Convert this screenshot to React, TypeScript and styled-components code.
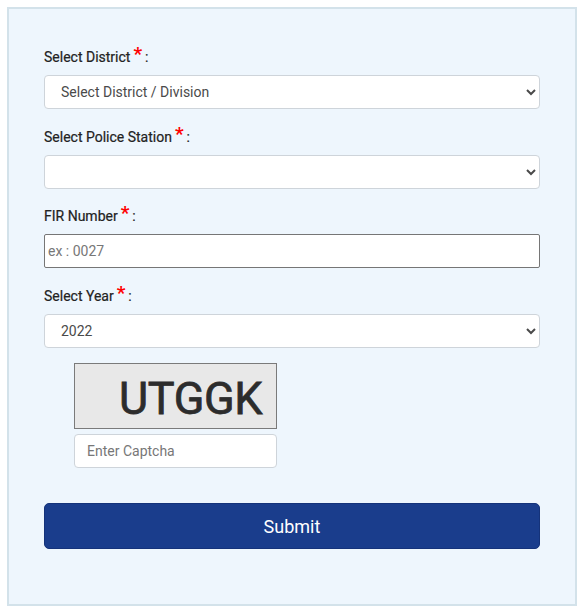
import React from "react";
import styled, { createGlobalStyle } from "styled-components";

const GlobalStyle = createGlobalStyle`
  body {
    margin: 0;
    background: #ffffff;
    font-family: Roboto, "Liberation Sans", Arial, sans-serif;
  }
`;

const Panel = styled.form`
  box-sizing: border-box;
  margin: 7px 0 0 7px;
  width: 570px;
  height: 599px;
  border: 2px solid #d3e2ea;
  background: #eef6fd;
  padding: 38px 35px 0 35px;
  display: flex;
  flex-direction: column;
`;

const Field = styled.div<{ $gap?: number }>`
  display: flex;
  flex-direction: column;
  width: 496px;
  margin-bottom: ${(p) => p.$gap ?? 18}px;
`;

const Label = styled.label`
  font-size: 14px;
  line-height: 20px;
  height: 20px;
  color: #222;
  font-weight: 400;
  -webkit-text-stroke: 0.2px #222;
  margin-bottom: 8px;
`;

const Star = styled.span`
  color: #ff0000;
  font-size: 19px;
  line-height: 0;
  font-weight: 700;
  -webkit-text-stroke: 0;
  margin: 0 3px 0 3px;
  position: relative;
  top: -2px;
`;

const Select = styled.select`
  box-sizing: border-box;
  width: 100%;
  height: 34px;
  padding: 0 12px;
  font-family: inherit;
  font-size: 14px;
  color: #4a4a4a;
  background-color: #fff;
  border: 1px solid #ced4da;
  border-radius: 4px;
`;

const TextInput = styled.input<{ $light?: boolean }>`
  box-sizing: border-box;
  width: 100%;
  height: 34px;
  padding: ${(p) => (p.$light ? "0 12px" : "0 3px")};
  font-family: inherit;
  font-size: 14px;
  color: #444;
  background: #fff;
  border: 1px solid ${(p) => (p.$light ? "#ced4da" : "#767676")};
  border-radius: ${(p) => (p.$light ? "4px" : "2px")};
  outline: none;
  &::placeholder {
    color: #777;
  }
`;

const CaptchaBlock = styled.div`
  display: flex;
  flex-direction: column;
  gap: 5px;
  width: 203px;
  margin: -3px 0 0 30px;
`;

const CaptchaImage = styled.div`
  box-sizing: border-box;
  height: 66px;
  background: #e8e8e8;
  border: 1px solid #7a7a7a;
  display: flex;
  align-items: center;
  justify-content: flex-end;
  padding: 4px 14px 0 0;
  font-size: 45px;
  letter-spacing: -0.4px;
  font-weight: 400;
  -webkit-text-stroke: 0.8px #2c2c2c;
  color: #2c2c2c;
  user-select: none;
`;

const SubmitButton = styled.button`
  box-sizing: border-box;
  width: 496px;
  height: 46px;
  margin-top: 35px;
  background: #1a3d8c;
  color: #fff;
  border: 1px solid #15337a;
  border-radius: 5px;
  font-family: inherit;
  font-size: 18px;
  cursor: pointer;
`;

function Required({ children }: { children: React.ReactNode }) {
  return (
    <Label>
      {children}
      <Star>*</Star>:
    </Label>
  );
}

export default function App() {
  return (
    <>
      <GlobalStyle />
      <Panel onSubmit={(e) => e.preventDefault()}>
        <Field>
          <Required>Select District</Required>
          <Select defaultValue="">
            <option value="">Select District / Division</option>
          </Select>
        </Field>
        <Field $gap={17}>
          <Required>Select Police Station</Required>
          <Select defaultValue="">
            <option value=""></option>
          </Select>
        </Field>
        <Field>
          <Required>FIR Number</Required>
          <TextInput placeholder="ex : 0027" />
        </Field>
        <Field>
          <Required>Select Year</Required>
          <Select defaultValue="2022">
            <option value="2022">2022</option>
            <option value="2021">2021</option>
          </Select>
        </Field>
        <CaptchaBlock>
          <CaptchaImage>UTGGK</CaptchaImage>
          <TextInput $light placeholder="Enter Captcha" />
        </CaptchaBlock>
        <SubmitButton type="submit">Submit</SubmitButton>
      </Panel>
    </>
  );
}
